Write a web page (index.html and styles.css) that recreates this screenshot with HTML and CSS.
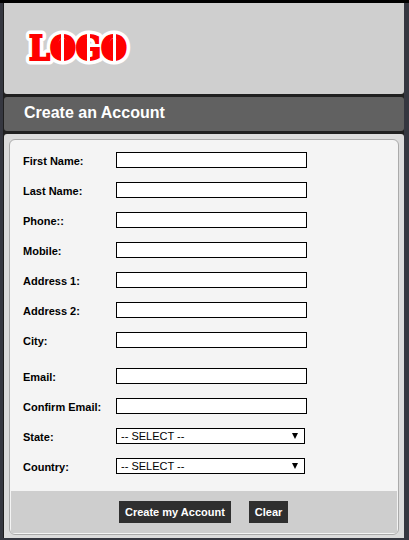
FILE: index.html
```html
<!DOCTYPE html>
<html lang="en">
<head>
    <meta charset="UTF-8">
    <meta name="viewport" content="width=device-width, initial-scale=1.0">
    <title>Create an Account</title>
    <link rel="stylesheet" href="styles.css">
</head>
<body>

<div class="page">
    <header class="header">
        <svg class="logo" width="112" height="44" viewBox="0 0 112 44" role="img" aria-label="LOGO">
            <!-- white outline, then the red letters -->
            <text class="logo-text logo-outline" x="7" y="35">LOGO</text>
            <text class="logo-text" x="7" y="35">LOGO</text>
            <!-- narrow the counters -->
            <g fill="#f00">
                <ellipse cx="41" cy="23" rx="6" ry="10"/>
                <ellipse cx="92" cy="23" rx="6" ry="10"/>
                <rect x="61" y="14" width="4" height="18"/>
            </g>
            <!-- stencil cuts -->
            <g fill="#fff">
                <rect x="39" y="9" width="3" height="28"/>
                <rect x="65" y="9" width="3" height="28"/>
                <rect x="91" y="9" width="3" height="28"/>
            </g>
        </svg>
    </header>

    <h1 class="title">Create an Account</h1>

    <main class="content">
        <form class="panel">
            <div class="fields">
                <div class="row">
                    <label for="firstName">First Name:</label>
                    <input type="text" id="firstName">
                </div>
                <div class="row">
                    <label for="lastName">Last Name:</label>
                    <input type="text" id="lastName">
                </div>
                <div class="row">
                    <label for="phone">Phone::</label>
                    <input type="text" id="phone">
                </div>
                <div class="row">
                    <label for="mobile">Mobile:</label>
                    <input type="text" id="mobile">
                </div>
                <div class="row">
                    <label for="address1">Address 1:</label>
                    <input type="text" id="address1">
                </div>
                <div class="row">
                    <label for="address2">Address 2:</label>
                    <input type="text" id="address2">
                </div>
                <div class="row">
                    <label for="city">City:</label>
                    <input type="text" id="city">
                </div>
                <div class="row row-group">
                    <label for="email">Email:</label>
                    <input type="text" id="email">
                </div>
                <div class="row">
                    <label for="confirmEmail">Confirm Email:</label>
                    <input type="text" id="confirmEmail">
                </div>
                <div class="row">
                    <label for="state">State:</label>
                    <div class="select">
                        <select id="state"><option>-- SELECT --</option></select>
                        <svg class="arrow" width="6" height="6" viewBox="0 0 6 6"><path d="M0 0h6L3 6z"/></svg>
                    </div>
                </div>
                <div class="row">
                    <label for="country">Country:</label>
                    <div class="select">
                        <select id="country"><option>-- SELECT --</option></select>
                        <svg class="arrow" width="6" height="6" viewBox="0 0 6 6"><path d="M0 0h6L3 6z"/></svg>
                    </div>
                </div>
            </div>
            <div class="actions">
                <button type="submit">Create my Account</button>
                <button type="reset">Clear</button>
            </div>
        </form>
    </main>
</div>

</body>
</html>
```

FILE: styles.css
```css
* {
    box-sizing: border-box;
}
body {
    margin: 0;
    border-top: 3px solid #000;
    background-color: #353740;
    font-family: "Liberation Sans", Arial, sans-serif;
    font-size: 11px;
    color: #000;
}
.page {
    display: flex;
    flex-direction: column;
    gap: 3px;
    margin: 0 5px 0 3px;
    border-left: 1px solid #1e1e1e;
    background-color: #202020;
}
.header {
    padding: 22px 18px 25px;
    background-color: #cfcfcf;
    border-radius: 0 0 3px 3px;
}
.logo {
    display: block;
}
.logo-text {
    font-family: "DejaVu Serif Condensed", "DejaVu Serif", serif;
    font-size: 33px;
    font-weight: bold;
    fill: #f00;
    stroke: #f00;
    stroke-width: 2px;
}
.logo-outline {
    stroke: #fff;
    stroke-width: 9px;
    stroke-linejoin: round;
}
.title {
    margin: 0;
    padding: 6px 20px 8px;
    background-color: #616161;
    border-radius: 3px;
    color: #fff;
    font-size: 16px;
    line-height: 20px;
}
.content {
    padding: 5px 5px 3px;
    background-color: #dcdcdc;
    border-radius: 3px 3px 0 0;
}
.panel {
    padding: 1px;
    border: 1px solid #aaa;
    border-radius: 6px;
    background-color: #f4f4f4;
}
.fields {
    display: flex;
    flex-direction: column;
    gap: 14px;
    padding: 11px 12px 17px;
}
.row {
    display: grid;
    grid-template-columns: 93px 1fr;
    align-items: start;
}
.row-group {
    margin-top: 6px;
}
label {
    padding-top: 2px;
    font-weight: bold;
    line-height: 14px;
}
input, select {
    display: block;
    height: 16px;
    margin: 0;
    border: 1px solid #000;
    border-radius: 0;
    background-color: #fff;
    color: #000;
    font: inherit;
}
input {
    width: 191px;
    padding: 0 4px;
}
.select {
    position: relative;
    width: 189px;
}
select {
    width: 100%;
    padding: 0 20px 0 4px;
    appearance: none;
}
.arrow {
    position: absolute;
    top: 5px;
    right: 7px;
    pointer-events: none;
}
.actions {
    display: flex;
    gap: 18px;
    padding: 10px 108px;
    background-color: #cecece;
}
button {
    height: 22px;
    padding: 0 6px;
    border: none;
    background-color: #2f2f2f;
    color: #fff;
    font: inherit;
    font-weight: bold;
    white-space: nowrap;
    cursor: pointer;
}
```
